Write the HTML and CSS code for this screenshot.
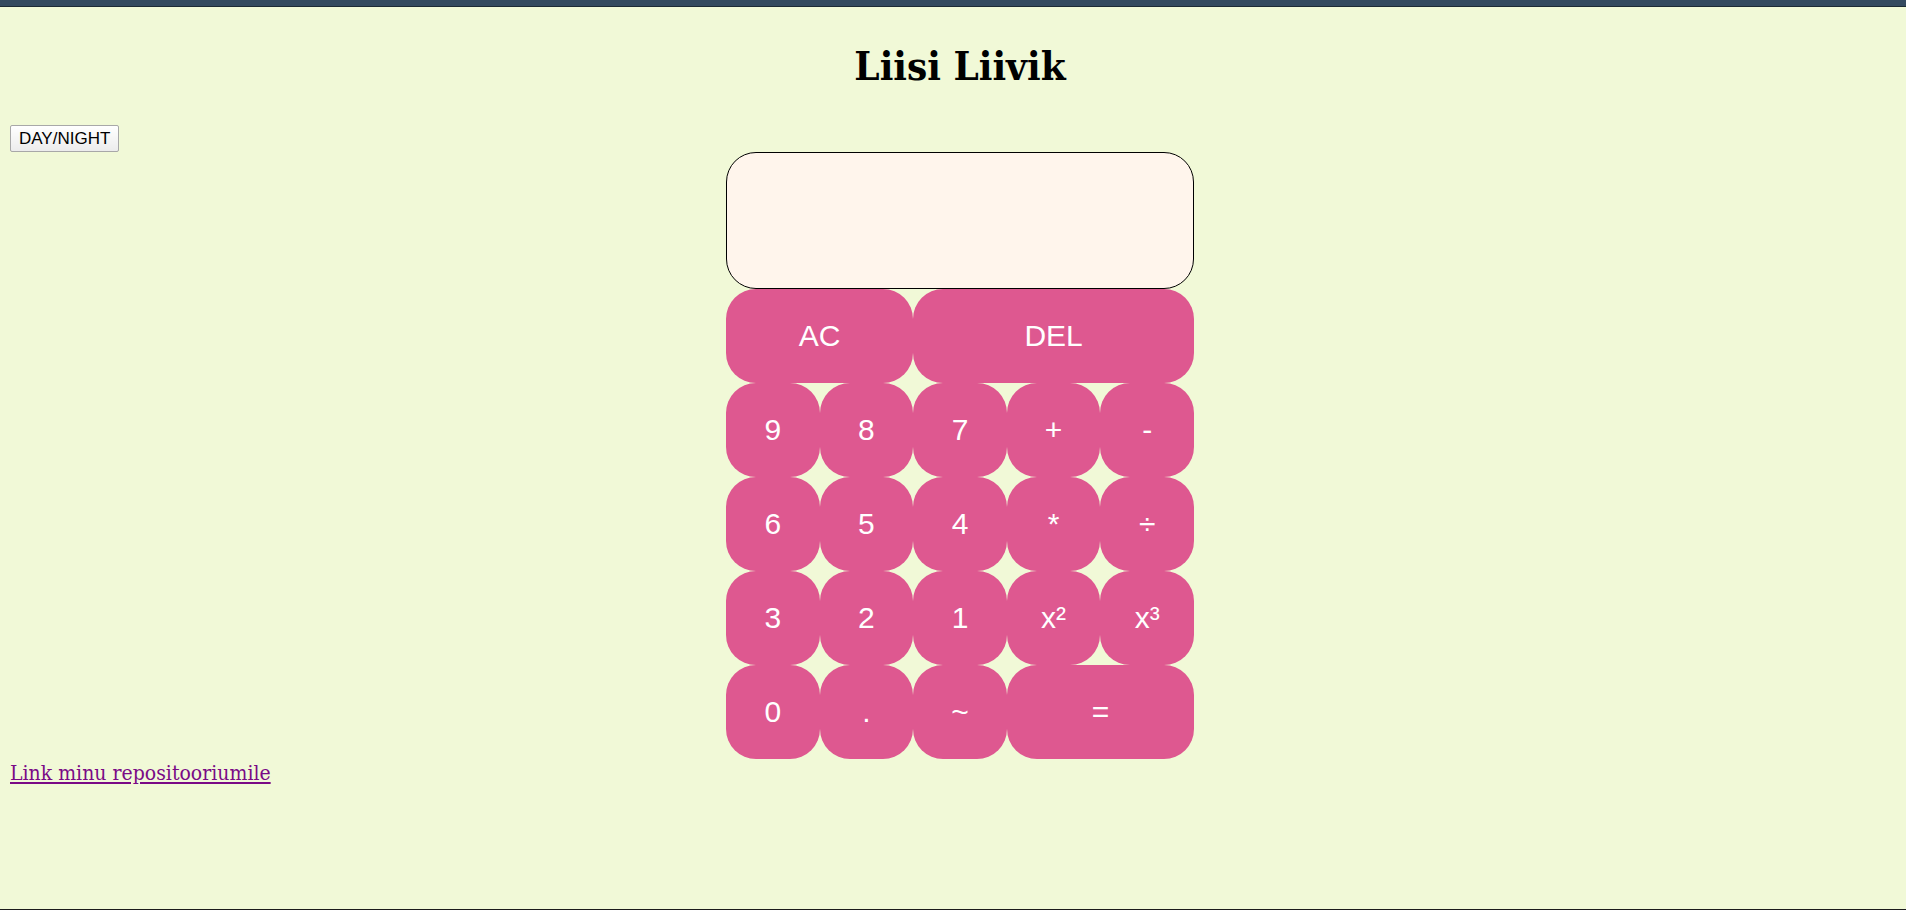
FILE: index.html
```html
<!DOCTYPE html>
<html lang="et">
<head>
<meta charset="utf-8">
<title>Liisi Liivik</title>
<link rel="stylesheet" href="styles.css">
</head>
<body>
<div class="chrome"></div>
<main class="page">
  <h1 class="title">Liisi Liivik</h1>
  <button class="mode" type="button">DAY/NIGHT</button>
  <div class="calc">
    <div class="screen"></div>
    <div class="keys">
      <button class="key span2" type="button">AC</button>
      <button class="key span3" type="button">DEL</button>
      <button class="key" type="button">9</button>
      <button class="key" type="button">8</button>
      <button class="key" type="button">7</button>
      <button class="key" type="button">+</button>
      <button class="key" type="button">-</button>
      <button class="key" type="button">6</button>
      <button class="key" type="button">5</button>
      <button class="key" type="button">4</button>
      <button class="key" type="button">*</button>
      <button class="key" type="button">÷</button>
      <button class="key" type="button">3</button>
      <button class="key" type="button">2</button>
      <button class="key" type="button">1</button>
      <button class="key" type="button">x²</button>
      <button class="key" type="button">x³</button>
      <button class="key" type="button">0</button>
      <button class="key" type="button">.</button>
      <button class="key" type="button">~</button>
      <button class="key span2" type="button">=</button>
    </div>
  </div>
  <a class="repo" href="#">Link minu repositooriumile</a>
</main>
</body>
</html>
```
FILE: styles.css
```css
html, body {
  margin: 0;
  padding: 0;
}

body {
  min-height: 100vh;
  box-sizing: border-box;
  background: #f1f9d7;
  border-bottom: 1px solid #1c1c1c;
  font-family: "DejaVu Serif", serif;
}

.chrome {
  height: 6px;
  background: #344a5f;
  border-bottom: 1px solid #1c2a34;
}

.page {
  padding: 0 10px;
}

.title {
  margin: 35px 0 36px;
  padding-left: 14px;
  text-align: center;
  font-family: "DejaVu Serif Condensed", "DejaVu Serif", serif;
  font-stretch: condensed;
  font-size: 40px;
  line-height: 47px;
  font-weight: bold;
  color: #000;
}

.mode {
  display: block;
  height: 27px;
  margin: 0;
  padding: 0 8px;
  font-family: "Liberation Sans", Arial, sans-serif;
  font-size: 17px;
  color: #000;
  background: linear-gradient(#ffffff, #ececec);
  border: 1px solid #a8a8a8;
  border-radius: 2px;
}

.calc {
  width: 468px;
  margin-left: calc(50% - 227px);
}

.screen {
  height: 137px;
  box-sizing: border-box;
  background: #fff5ec;
  border: 1px solid #000;
  border-radius: 30px;
}

.keys {
  display: grid;
  grid-template-columns: repeat(5, 1fr);
  grid-auto-rows: 94px;
}

.key {
  margin: 0;
  padding: 0;
  border: none;
  border-radius: 30px;
  background: #de5890;
  color: #fff;
  font-family: "Liberation Sans", Arial, sans-serif;
  font-size: 30px;
  line-height: 1;
}

.span2 {
  grid-column: span 2;
}

.span3 {
  grid-column: span 3;
}

.repo {
  display: block;
  width: max-content;
  margin-top: 2px;
  font-family: "DejaVu Serif Condensed", "DejaVu Serif", serif;
  font-stretch: condensed;
  font-size: 21px;
  line-height: 24px;
  color: #7a0a86;
  text-decoration: underline;
}
```
